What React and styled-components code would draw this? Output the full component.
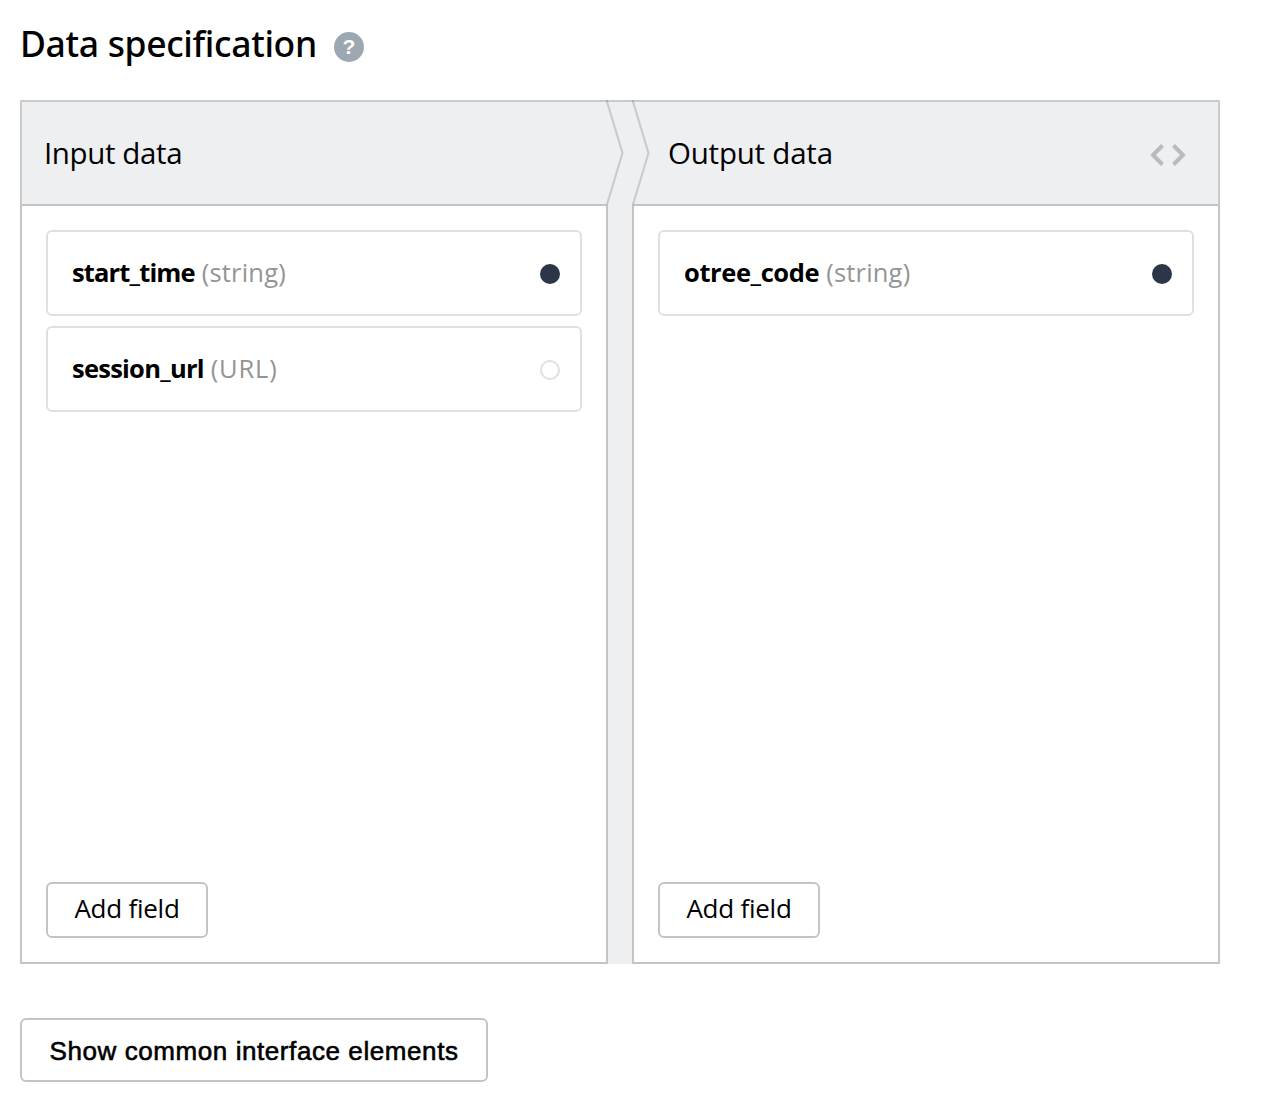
import React from "react";
import styled, { createGlobalStyle } from "styled-components";

const GlobalStyle = createGlobalStyle`
  * { box-sizing: border-box; }
  body {
    margin: 0;
    background: #fff;
    color: #000;
    font-family: "Open Sans", "Noto Sans", sans-serif;
  }
`;

const Page = styled.main`
  display: flex;
  flex-direction: column;
  align-items: flex-start;
  width: 1268px;
  height: 1096px;
  padding: 20px 20px 0;
`;

const TitleRow = styled.header`
  display: flex;
  align-items: center;
  gap: 17px;
  height: 48px;
  margin-bottom: 32px;
`;

const Title = styled.h1`
  width: 297px;
  margin: 0;
  padding-bottom: 2px;
  font-family: "Noto Sans", sans-serif;
  font-size: 35.5px;
  font-weight: 500;
  line-height: 46px;
  letter-spacing: -0.35px;
  white-space: nowrap;
`;

const HelpBadge = styled.span`
  display: flex;
  align-items: center;
  justify-content: center;
  width: 30px;
  height: 30px;
  margin-top: 6px;
  border-radius: 50%;
  background: #9da7b2;
  color: #fff;
  font: 700 21px/30px "Liberation Sans", Arial, sans-serif;
`;

const Board = styled.section`
  position: relative;
  display: grid;
  grid-template-columns: 588px 24px 588px;
  height: 864px;
  margin-bottom: 54px;
`;

const Column = styled.div`
  display: flex;
  flex-direction: column;
`;

const Gutter = styled.div`
  border-top: 2px solid #c9cbcd;
  background: #eeeff1;
`;

const Arrows = styled.svg`
  position: absolute;
  top: 0;
  left: 584px;
  width: 50px;
  height: 106px;
`;

const ColumnHead = styled.div`
  display: flex;
  align-items: center;
  justify-content: space-between;
  height: 106px;
  padding: 2px 32px 0 ${(p) => (p.$side === "left" ? "22px" : "36px")};
  border: 2px solid #c9cbcd;
  border-bottom-color: #c4c4c5;
  border-${(p) => (p.$side === "left" ? "right" : "left")}: 0;
  background: #eeeff1;
`;

const ColumnTitle = styled.h2`
  margin: 0;
  padding-bottom: 2px;
  font-size: 29.5px;
  font-weight: 400;
  line-height: 40px;
  letter-spacing: ${(p) => p.$tracking};
  white-space: nowrap;
`;

const ColumnBody = styled.div`
  display: flex;
  flex: 1;
  flex-direction: column;
  gap: 10px;
  padding: 24px;
  border: 2px solid #c4c4c4;
  border-top: 0;
`;

const Field = styled.div`
  display: flex;
  align-items: center;
  justify-content: space-between;
  height: 86px;
  padding: 0 20px 0 24px;
  border: 2px solid #e0e0e0;
  border-radius: 6px;
`;

const FieldLabel = styled.div`
  display: flex;
  gap: 7px;
  padding-bottom: 2px;
  font-size: 25.5px;
  line-height: 36px;
  white-space: nowrap;
`;

const FieldName = styled.b`
  font-weight: 700;
  letter-spacing: ${(p) => p.$tracking};
`;

const FieldType = styled.span`
  color: #949494;
  letter-spacing: ${(p) => p.$tracking};
`;

const Dot = styled.span`
  width: 20px;
  height: 20px;
  margin-top: 2px;
  border: 2px solid ${(p) => (p.$filled ? "#2b3648" : "#e0e0e0")};
  border-radius: 50%;
  background: ${(p) => (p.$filled ? "#2b3648" : "#fff")};
`;

const Button = styled.button`
  display: flex;
  align-items: center;
  justify-content: center;
  padding: 0;
  border: 2px solid #c4c4c4;
  border-radius: 6px;
  background: #fff;
  color: #000;
  white-space: nowrap;
`;

const AddButton = styled(Button)`
  width: 162px;
  height: 56px;
  margin-top: auto;
  padding-bottom: 4px;
  font: 400 26px/36px "Open Sans", "Noto Sans", sans-serif;
  letter-spacing: -0.25px;
`;

const ShowButton = styled(Button)`
  width: 468px;
  height: 64px;
  padding-top: 2px;
  font: 400 26px/36px "Liberation Sans", Arial, sans-serif;
  letter-spacing: 0.58px;
  -webkit-text-stroke: 0.6px #000;
`;

const CodeIcon = styled(({ className }) => (
  <svg className={className} width="36" height="22" viewBox="0 0 36 22" fill="none" stroke="#b9baba" strokeWidth="4">
    <path d="M12.5 1.5 3 11l9.5 9.5M23.5 1.5 33 11l-9.5 9.5" />
  </svg>
))`
  margin-top: 2px;
`;

const columns = [
  {
    side: "left",
    title: "Input data",
    tracking: "-0.38px",
    fields: [
      { name: "start_time", type: "(string)", filled: true, nameTracking: "-0.85px", typeTracking: "0.2px" },
      { name: "session_url", type: "(URL)", filled: false, nameTracking: "-0.75px", typeTracking: "0.8px" },
    ],
  },
  {
    side: "right",
    title: "Output data",
    tracking: "-0.22px",
    fields: [
      { name: "otree_code", type: "(string)", filled: true, nameTracking: "-0.4px", typeTracking: "0.2px" },
    ],
  },
];

const DataColumn = ({ side, title, tracking, fields }) => (
  <Column>
    <ColumnHead $side={side}>
      <ColumnTitle $tracking={tracking}>{title}</ColumnTitle>
      {side === "right" && <CodeIcon />}
    </ColumnHead>
    <ColumnBody>
      {fields.map((f) => (
        <Field key={f.name}>
          <FieldLabel>
            <FieldName $tracking={f.nameTracking}>{f.name}</FieldName>
            <FieldType $tracking={f.typeTracking}>{f.type}</FieldType>
          </FieldLabel>
          <Dot $filled={f.filled} />
        </Field>
      ))}
      <AddButton>Add field</AddButton>
    </ColumnBody>
  </Column>
);

export default function App() {
  return (
    <Page>
      <GlobalStyle />
      <TitleRow>
        <Title>Data specification</Title>
        <HelpBadge>?</HelpBadge>
      </TitleRow>
      <Board>
        <DataColumn {...columns[0]} />
        <Gutter />
        <DataColumn {...columns[1]} />
        <Arrows viewBox="0 0 50 106" fill="none" stroke="#000" strokeOpacity="0.15" strokeWidth="2.2">
          <path d="M2.5 0 18.5 53 3 104.5M28.5 0 44.5 53 29 104.5" />
        </Arrows>
      </Board>
      <ShowButton>Show common interface elements</ShowButton>
    </Page>
  );
}
